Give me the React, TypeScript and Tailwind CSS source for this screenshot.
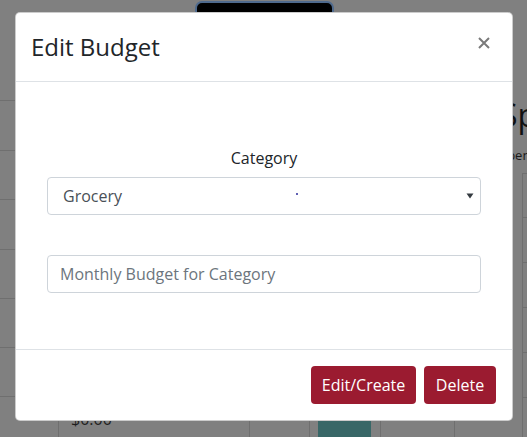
import React from "react";

const font = { fontFamily: '"Open Sans", "Noto Sans", Arial, sans-serif' };

function Caret() {
  return (
    <svg width="8" height="6" viewBox="0 0 8 6" className="block">
      <path d="M0.5 0.5 L7.5 0.5 L4 5.5 Z" fill="#343a40" />
    </svg>
  );
}

function CloseX() {
  return (
    <svg width="12" height="12" viewBox="0 0 12 12" className="block" aria-label="Close">
      <path d="M1 1 L11 11 M11 1 L1 11" stroke="#7a7a7a" strokeWidth="2" strokeLinecap="butt" />
    </svg>
  );
}

export default function App() {
  return (
    <div
      className="relative w-[527px] h-[437px] overflow-hidden bg-[#808080]"
      style={font}
    >
      {/* dimmed page behind the modal */}
      <div className="flex w-full h-full">
        <div className="relative w-[500px] shrink-0 flex flex-col">
          <div className="h-[100px] flex justify-center">
            <div className="ml-[28px] mt-[1px] w-[139px] h-[40px] rounded-[7px] border-2 border-[#4f6a8d] bg-black" />
          </div>
          <div className="h-[50px] border-t border-[#6f6f6f]" />
          <div className="h-[49px] border-t border-[#6f6f6f]" />
          <div className="h-[50px] border-t border-[#6f6f6f]" />
          <div className="h-[49px] border-t border-[#6f6f6f]" />
          <div className="h-[49px] border-t border-[#6f6f6f]" />
          <div className="h-[49px] border-t border-[#6f6f6f]" />
          <div className="flex-1 border-t border-[#6f6f6f] flex">
            <div className="w-[58px]" />
            <div className="w-[191px] border-l border-[#6f6f6f] pl-[12px] pt-[10px] text-[16px] text-[#1e1e1e]">
              $0.00
            </div>
            <div className="w-[60px] border-l border-[#6f6f6f]" />
            <div className="w-[71px] border-l border-[#6f6f6f] pl-[8px] flex">
              <div className="w-[53px] bg-[#386767]" />
            </div>
            <div className="w-[74px] border-l border-[#6f6f6f]" />
            <div className="flex-1 border-l border-[#6f6f6f]" />
          </div>
        </div>
        <div className="flex-1 flex flex-col">
          <div className="h-[96px]" />
          <div className="text-[32px] leading-[38px] text-[#111] whitespace-nowrap">
            Spending
          </div>
          <div className="mt-[12px] text-[13px] leading-[18px] text-[#1a1a1a] whitespace-nowrap">
            Spending this month
          </div>
          <div className="mt-[9px] flex-1 flex flex-col">
            <div className="h-[44px] border-t border-[#6f6f6f] ml-[22px] border-l" />
            <div className="h-[45px] border-t border-[#6f6f6f] ml-[22px] border-l" />
            <div className="h-[45px] border-t border-[#6f6f6f] ml-[22px] border-l" />
            <div className="h-[45px] border-t border-[#6f6f6f] ml-[22px] border-l" />
            <div className="h-[45px] border-t border-[#6f6f6f] ml-[22px] border-l" />
            <div className="flex-1 border-t border-[#6f6f6f] ml-[22px] border-l" />
          </div>
        </div>
      </div>

      {/* modal */}
      <div className="absolute left-[15px] top-[12px] w-[498px] bg-white rounded-[5px] border border-black/20 flex flex-col">
        <div className="flex items-start justify-between p-4 border-b border-[#dee2e6]">
          <h5 className="-ml-[1px] text-[24px] leading-[36px] font-medium text-[#212529]">
            Edit Budget
          </h5>
          <span className="mt-[8px] mr-[6px]">
            <CloseX />
          </span>
        </div>
        <div className="h-[267px] px-[31px] pt-[64px]">
          <div className="text-center text-[16px] leading-[24px] text-[#212529] mb-[7px]">
            Category
          </div>
          <div className="relative h-[38px] border border-[#ced4da] rounded-[4px] flex items-center justify-between pl-[15px] pr-[6px] text-[16px] text-[#495057]">
            <span>Grocery</span>
            <span className="absolute left-[248px] top-[15px] w-[2px] h-[2px] rounded-full bg-[#2b2b9a]" />
            <Caret />
          </div>
          <div className="mt-[40px] h-[38px] border border-[#ced4da] rounded-[4px] flex items-center pl-[12px] text-[16px] text-[#6c757d]">
            Monthly Budget for Category
          </div>
        </div>
        <div className="flex justify-end gap-[8px] p-4 border-t border-[#dee2e6]">
          <button className="h-[38px] w-[105px] rounded-[4px] bg-[#9b1b30] text-white text-[16px]">
            Edit/Create
          </button>
          <button className="h-[38px] w-[72px] rounded-[4px] bg-[#9b1b30] text-white text-[16px]">
            Delete
          </button>
        </div>
      </div>
    </div>
  );
}
